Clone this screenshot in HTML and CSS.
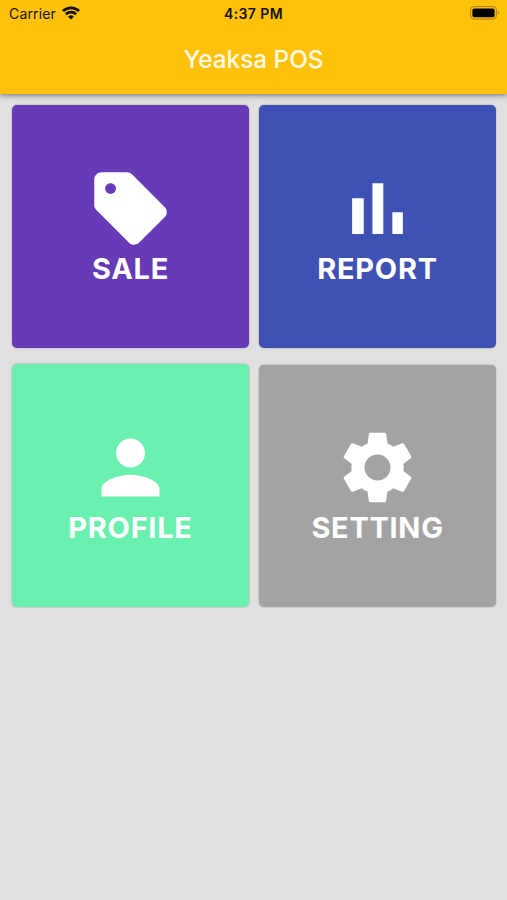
FILE: index.html
```html
<!DOCTYPE html>
<html lang="en">
<head>
    <meta charset="UTF-8">
    <meta name="viewport" content="width=device-width, initial-scale=1.0">
    <title>Yeaksa POS</title>
    <link rel="stylesheet" href="styles.css">
</head>
<body>
    <header class="header">
        <div class="status-bar">
            <div class="carrier">
                <span>Carrier</span>
                <svg class="wifi" viewBox="0 0 18 14" fill="none" stroke="#161100" stroke-width="2.8">
                    <path d="M1 5.1a11.5 11.5 0 0 1 16 0"/>
                    <path d="M3.9 8.3a7.3 7.3 0 0 1 10.2 0"/>
                    <path d="M9 13.6L6.1 10.7a4.1 4.1 0 0 1 5.8 0z" fill="#161100" stroke="none"/>
                </svg>
            </div>
            <div class="time">4:37 PM</div>
            <svg class="battery" viewBox="0 0 30 14">
                <rect x=".6" y=".6" width="25.8" height="12.4" rx="3.4" fill="none" stroke="#a67d08" stroke-width="1"/>
                <rect x="2.4" y="2.4" width="22.2" height="8.8" rx="1.8" fill="#000"/>
                <path d="M27.8 4.8v4a2.3 2.3 0 0 0 0-4z" fill="#a67d08"/>
            </svg>
        </div>
        <h1 class="title">Yeaksa POS</h1>
    </header>

    <main class="menu">
        <a href="#" class="card sale">
            <svg class="icon" viewBox="0 0 24 24"><path d="M21.41 11.58l-9-9C12.05 2.22 11.55 2 11 2H4c-1.1 0-2 .9-2 2v7c0 .55.22 1.05.59 1.42l9 9c.36.36.86.58 1.41.58.55 0 1.05-.22 1.41-.59l7-7c.37-.36.59-.86.59-1.41 0-.55-.23-1.06-.59-1.42zM6.5 8C5.67 8 5 7.33 5 6.5S5.67 5 6.5 5 8 5.67 8 6.5 7.33 8 6.5 8z"/></svg>
            <span class="label">SALE</span>
        </a>
        <a href="#" class="card report">
            <svg class="icon" viewBox="0 0 24 24"><path d="M5 9.2h3.2V19H5zM10.6 5h3v14h-3zM16.1 13H19v6h-2.9z"/></svg>
            <span class="label">REPORT</span>
        </a>
        <a href="#" class="card profile">
            <svg class="icon" viewBox="0 0 24 24"><path d="M12 12c2.21 0 4-1.79 4-4s-1.79-4-4-4-4 1.79-4 4 1.79 4 4 4zm0 2c-2.67 0-8 1.34-8 4v2h16v-2c0-2.66-5.33-4-8-4z"/></svg>
            <span class="label">PROFILE</span>
        </a>
        <a href="#" class="card setting">
            <svg class="icon" viewBox="0 0 24 24"><path d="M19.14 12.94c.04-.3.06-.61.06-.94 0-.32-.02-.64-.07-.94l2.03-1.58c.18-.14.23-.41.12-.61l-1.92-3.32c-.12-.22-.37-.29-.59-.22l-2.39.96c-.5-.38-1.03-.7-1.62-.94L14.4 2.81c-.04-.24-.24-.41-.48-.41h-3.84c-.24 0-.43.17-.47.41L9.25 5.35C8.66 5.59 8.12 5.92 7.63 6.29L5.24 5.33c-.22-.08-.47 0-.59.22L2.74 8.87c-.12.21-.08.47.12.61l2.03 1.58c-.05.3-.09.63-.09.94s.02.64.07.94l-2.03 1.58c-.18.14-.23.41-.12.61l1.92 3.32c.12.22.37.29.59.22l2.39-.96c.5.38 1.03.7 1.62.94l.36 2.54c.05.24.24.41.48.41h3.84c.24 0 .44-.17.47-.41l.36-2.54c.59-.24 1.13-.56 1.62-.94l2.39.96c.22.08.47 0 .59-.22l1.92-3.32c.12-.22.07-.47-.12-.61l-2.01-1.58zM12 15.6c-1.98 0-3.6-1.62-3.6-3.6s1.62-3.6 3.6-3.6 3.6 1.62 3.6 3.6-1.62 3.6-3.6 3.6z"/></svg>
            <span class="label">SETTING</span>
        </a>
    </main>
</body>
</html>
```

FILE: styles.css
```css
body {
    margin: 0;
    min-height: 100vh;
    font-family: Inter, "Liberation Sans", sans-serif;
    background-color: #e0e0e0;
}
.header {
    height: 94px;
    background-color: #ffc109;
    box-shadow: 0 2px 5px rgba(0, 0, 0, 0.4);
}
.status-bar {
    display: grid;
    grid-template-columns: 1fr auto 1fr;
    align-items: center;
    height: 27px;
    padding: 0 7px 0 9px;
    font-size: 14px;
    color: #161100;
}
.carrier {
    display: flex;
    align-items: center;
    gap: 6px;
    letter-spacing: 0.15px;
}
.wifi {
    width: 18px;
    height: 14px;
    margin-bottom: 1px;
}
.time {
    margin-right: 2px;
    font-size: 14px;
    font-weight: 600;
    letter-spacing: 0.4px;
}
.battery {
    width: 30px;
    height: 14px;
    margin-bottom: 1px;
    justify-self: end;
}
.title {
    margin: 0;
    line-height: 64px;
    font-size: 24.3px;
    font-weight: 500;
    text-align: center;
    color: #fffbe8;
}
.menu {
    display: grid;
    grid-template-columns: 1fr 1fr;
    gap: 16px 10px;
    padding: 11px 11px 11px 12px;
}
.card {
    box-sizing: border-box;
    display: flex;
    flex-direction: column;
    align-items: center;
    justify-content: center;
    height: 243px;
    border-radius: 5px;
    box-shadow: 0 0 2px rgba(0, 0, 0, 0.3);
    color: #fff;
    text-decoration: none;
}
.icon {
    width: 87px;
    height: 87px;
    margin-top: -1px;
    fill: #fff;
}
.label {
    line-height: 34px;
    font-size: 29px;
    font-weight: 700;
    letter-spacing: 0.7px;
}
.sale,
.report,
.profile {
    padding-bottom: 1px;
}
.sale {
    background-color: #673ab7;
}
.report {
    background-color: #3f51b5;
}
.profile {
    background-color: #69f0ae;
}
.setting {
    height: 242px;
    margin-top: 1px;
    padding-bottom: 2px;
    background-color: #a3a3a3;
}
```
